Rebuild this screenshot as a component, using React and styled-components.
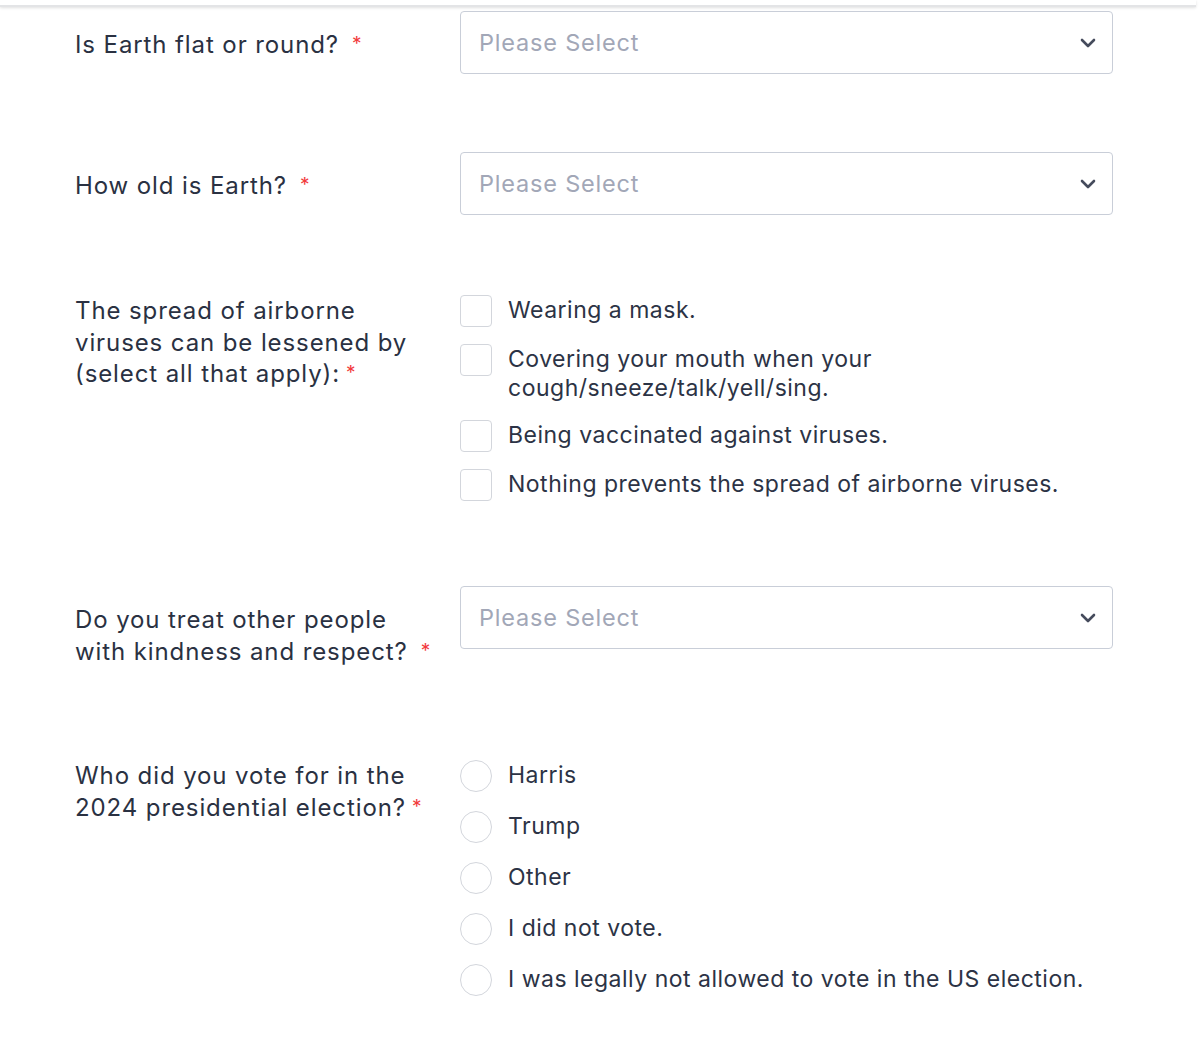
import React from "react";
import styled, { createGlobalStyle } from "styled-components";

const GlobalStyle = createGlobalStyle`
  body {
    margin: 0;
    background: #fff;
    font-family: Inter, "Noto Sans", "Liberation Sans", sans-serif;
    color: #2c3345;
  }
`;

const TopBar = styled.div`
  width: 1196px;
  height: 5px;
  border-bottom: 2px solid #e3e4e6;
  box-shadow: 0 1px 3px rgba(0, 0, 0, 0.12);
`;

const Form = styled.div`
  padding: 4px 0 0 75px;
`;

const Row = styled.div`
  display: flex;
  align-items: flex-start;
  margin-top: ${(p) => p.$space || 0}px;
`;

const Label = styled.div`
  width: 385px;
  flex-shrink: 0;
  padding-top: ${(p) => (p.$inset ? 18 : 0)}px;
  font-size: 24px;
  letter-spacing: 0.9px;
  line-height: 31.5px;
  color: #2a3142;
`;

const Required = styled.span`
  color: #f23a3c;
  font-size: 19px;
  letter-spacing: 0;
  margin-left: ${(p) => (p.$wide ? 13 : 6)}px;
  position: relative;
  top: -3px;
`;

const Select = styled.div`
  width: 653px;
  height: 63px;
  box-sizing: border-box;
  border: 1px solid #c9ced8;
  border-radius: 4px;
  display: flex;
  align-items: center;
  justify-content: space-between;
  padding: 0 16px 0 18px;
  font-size: 23.5px;
  letter-spacing: 0.8px;
  color: #a2a7b7;
`;

const Options = styled.div`
  display: flex;
  flex-direction: column;
  gap: ${(p) => p.$gap}px;
`;

const Option = styled.label`
  display: flex;
  align-items: flex-start;
  gap: 16px;
  font-size: 23px;
  letter-spacing: 0.5px;
  line-height: 29px;
  color: #2c3345;
`;

const Box = styled.span`
  width: 32px;
  height: 32px;
  flex-shrink: 0;
  box-sizing: border-box;
  border: 1.5px solid #d3d6dc;
  border-radius: ${(p) => (p.$round ? "50%" : "4px")};
  background: #fff;
`;

const OptionText = styled.span`
  padding-top: 1px;
`;

function Chevron() {
  return (
    <svg width="16" height="10" viewBox="0 0 16 10">
      <path
        d="M2 2 L8 8 L14 2"
        fill="none"
        stroke="#454b5c"
        strokeWidth="2.6"
        strokeLinecap="round"
        strokeLinejoin="round"
      />
    </svg>
  );
}

function Dropdown() {
  return (
    <Select>
      <span>Please Select</span>
      <Chevron />
    </Select>
  );
}

const checks = [
  "Wearing a mask.",
  <>
    Covering your mouth when your
    <br />
    cough/sneeze/talk/yell/sing.
  </>,
  "Being vaccinated against viruses.",
  "Nothing prevents the spread of airborne viruses.",
];

const votes = [
  "Harris",
  "Trump",
  "Other",
  "I did not vote.",
  "I was legally not allowed to vote in the US election.",
];

export default function App() {
  return (
    <>
      <GlobalStyle />
      <TopBar />
      <Form>
        <Row>
          <Label $inset>
            Is Earth flat or round?<Required $wide>*</Required>
          </Label>
          <Dropdown />
        </Row>
        <Row $space={78}>
          <Label $inset>
            How old is Earth?<Required $wide>*</Required>
          </Label>
          <Dropdown />
        </Row>
        <Row $space={80}>
          <Label>
            The spread of airborne
            <br />
            viruses can be lessened by
            <br />
            (select all that apply):<Required>*</Required>
          </Label>
          <Options $gap={17}>
            {checks.map((c, i) => (
              <Option key={i}>
                <Box />
                <OptionText>{c}</OptionText>
              </Option>
            ))}
          </Options>
        </Row>
        <Row $space={85}>
          <Label $inset>
            Do you treat other people
            <br />
            with kindness and respect?<Required $wide>*</Required>
          </Label>
          <Dropdown />
        </Row>
        <Row $space={91}>
          <Label>
            Who did you vote for in the
            <br />
            2024 presidential election?<Required>*</Required>
          </Label>
          <Options $gap={19}>
            {votes.map((v) => (
              <Option key={v}>
                <Box $round />
                <OptionText>{v}</OptionText>
              </Option>
            ))}
          </Options>
        </Row>
      </Form>
    </>
  );
}
